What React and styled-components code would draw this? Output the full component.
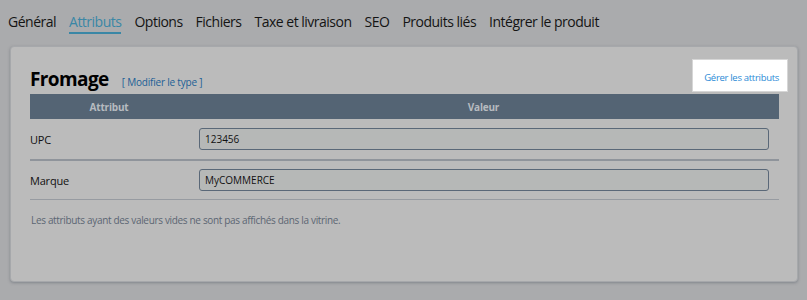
import React from "react";
import styled, { createGlobalStyle } from "styled-components";

const GlobalStyle = createGlobalStyle`
  html, body {
    margin: 0;
    padding: 0;
    background: #aaabad;
    font-family: "Open Sans", "Noto Sans", sans-serif;
  }
`;

const Page = styled.div`
  width: 807px;
  height: 300px;
  padding: 10px 9px 0 10px;
  box-sizing: border-box;
`;

const Tabs = styled.nav`
  display: flex;
  gap: 13px;
  margin-left: -2px;
  height: 36px;
`;

const Tab = styled.div`
  font-size: 14px;
  color: ${(p) => (p.active ? "#3a87a6" : "#141414")};
  letter-spacing: -0.5px;
  padding-top: 2px;
  height: 20px;
  border-bottom: 2px solid ${(p) => (p.active ? "#3a87a6" : "transparent")};
`;

const Card = styled.section`
  background: #bbbbbb;
  border: 1px solid #a6a8ab;
  border-radius: 4px;
  box-shadow: 0 1px 3px rgba(80, 88, 100, 0.45);
  height: 236px;
  box-sizing: border-box;
  padding: 12px 18px 0 19px;
`;

const Head = styled.div`
  display: flex;
  align-items: center;
  justify-content: space-between;
  height: 36px;
`;

const TitleGroup = styled.div`
  display: flex;
  align-items: baseline;
  gap: 13px;
  padding-top: 3px;
`;

const Title = styled.h2`
  margin: 0;
  font-size: 19px;
  font-weight: 700;
  color: #000;
  letter-spacing: -0.6px;
`;

const TypeLink = styled.span`
  font-size: 10px;
  color: #1c5f96;
  letter-spacing: -0.2px;
`;

const Highlight = styled.div`
  background: #ffffff;
  border: 1px solid #d6d6d6;
  width: 96px;
  height: 33px;
  box-sizing: border-box;
  display: flex;
  align-items: center;
  justify-content: flex-end;
  padding: 3px 8px 0 0;
  margin-right: -9px;
  margin-top: -3px;
`;

const ManageLink = styled.span`
  font-size: 9.5px;
  color: #2a8ad6;
  white-space: nowrap;
  letter-spacing: -0.3px;
`;

const Table = styled.div`
  margin-top: -1px;
`;

const HeaderRow = styled.div`
  display: grid;
  grid-template-columns: 158px 1fr;
  background: #546474;
  height: 25px;
  align-items: center;
  font-size: 10px;
  font-weight: 700;
  color: #b7bbc0;
  letter-spacing: -0.2px;
`;

const HeaderCell = styled.div`
  text-align: center;
`;

const Row = styled.div`
  display: grid;
  grid-template-columns: 169px 1fr;
  align-items: center;
  height: ${(p) => p.h}px;
  border-bottom: ${(p) => p.line};
  box-sizing: border-box;
`;

const Label = styled.div`
  font-size: 11px;
  color: #111;
  letter-spacing: -0.2px;
`;

const Input = styled.div`
  height: 22px;
  box-sizing: border-box;
  border: 1px solid #5a6878;
  border-radius: 3px;
  background: #b6b8b7;
  font-size: 10px;
  color: #111;
  display: flex;
  align-items: center;
  padding-left: 5px;
  margin-right: 10px;
`;

const Note = styled.p`
  margin: 13px 0 0 1px;
  font-size: 10px;
  color: #5b6673;
  letter-spacing: -0.33px;
`;

const tabs = [
  "Général",
  "Attributs",
  "Options",
  "Fichiers",
  "Taxe et livraison",
  "SEO",
  "Produits liés",
  "Intégrer le produit",
];

export default function App() {
  return (
    <Page>
      <GlobalStyle />
      <Tabs>
        {tabs.map((t) => (
          <Tab key={t} active={t === "Attributs"}>
            {t}
          </Tab>
        ))}
      </Tabs>
      <Card>
        <Head>
          <TitleGroup>
            <Title>Fromage</Title>
            <TypeLink>[ Modifier le type ]</TypeLink>
          </TitleGroup>
          <Highlight>
            <ManageLink>Gérer les attributs</ManageLink>
          </Highlight>
        </Head>
        <Table>
          <HeaderRow>
            <HeaderCell>Attribut</HeaderCell>
            <HeaderCell>Valeur</HeaderCell>
          </HeaderRow>
          <Row h={42} line="2px solid #8f949b">
            <Label>UPC</Label>
            <Input>123456</Input>
          </Row>
          <Row h={39} line="1px solid #979ba1">
            <Label>Marque</Label>
            <Input>MyCOMMERCE</Input>
          </Row>
        </Table>
        <Note>Les attributs ayant des valeurs vides ne sont pas affichés dans la vitrine.</Note>
      </Card>
    </Page>
  );
}
